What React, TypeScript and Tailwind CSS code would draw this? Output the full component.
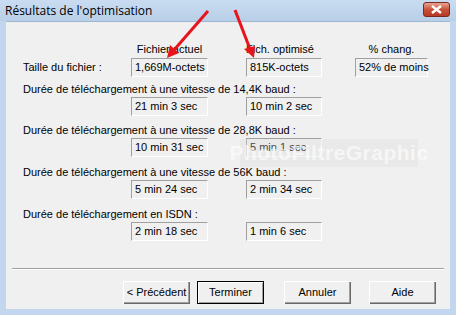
import React from "react";

const font = { fontFamily: "'Liberation Sans', Arial, sans-serif" };

function Box({ children }: { children: React.ReactNode }) {
  return (
    <div className="h-[19px] border-t border-l border-t-[#a0a0a0] border-l-[#a0a0a0] border-r border-b border-r-white border-b-white bg-[#f0f0f0] pl-[3px] flex items-center text-[11px] text-black whitespace-nowrap">
      {children}
    </div>
  );
}

function Button({ label, primary }: { label: string; primary?: boolean }) {
  return (
    <div
      className={
        "w-[67px] h-[23px] flex items-center justify-center text-[11px] text-black bg-[#f0f0f0] whitespace-nowrap " +
        (primary
          ? "border border-black shadow-[inset_1px_1px_0_#fff,inset_-1px_-1px_0_#a0a0a0]"
          : "shadow-[inset_1px_1px_0_#fff,inset_-1px_-1px_0_#696969,inset_-2px_-2px_0_#a0a0a0]")
      }
    >
      {label}
    </div>
  );
}

export default function App() {
  const rows = [
    { label: "Durée de téléchargement à une vitesse de 14,4K baud :", a: "21 min 3 sec", b: "10 min 2 sec", mt: "mt-[5px]" },
    { label: "Durée de téléchargement à une vitesse de 28,8K baud :", a: "10 min 31 sec", b: "5 min 1 sec", mt: "mt-[7px]" },
    { label: "Durée de téléchargement à une vitesse de 56K baud :", a: "5 min 24 sec", b: "2 min 34 sec", mt: "mt-[8px]" },
    { label: "Durée de téléchargement en ISDN :", a: "2 min 18 sec", b: "1 min 6 sec", mt: "mt-[8px]" },
  ];

  return (
    <div className="relative w-[456px] h-[315px] overflow-hidden bg-[#c2d7ee]" style={font}>
      {/* title bar */}
      <div className="h-[21px] flex items-center justify-between pl-[5px] pr-[6px] bg-gradient-to-b from-[#c9dcf1] to-[#b9cfe8]">
        <span className="text-[12px] text-black" style={{ fontFamily: "'Open Sans', 'Noto Sans', sans-serif" }}>
          Résultats de l'optimisation
        </span>
        <div className="w-[27px] h-[15px] mt-[-2px] rounded-[3px] border border-[#7a2a20] bg-gradient-to-b from-[#e8a493] via-[#c8513a] to-[#b63a23] flex items-center justify-center">
          <svg width="11" height="9" viewBox="0 0 11 9">
            <path d="M1 1 L10 8 M10 1 L1 8" stroke="#fff" strokeWidth="2.4" />
          </svg>
        </div>
      </div>

      {/* client area */}
      <div className="mx-[6px] h-[288px] bg-[#f0f0f0] border-t border-[#9fb7d1] pt-[20px]">
        <div className="grid grid-cols-[108px_77px_38px_76px_33px_73px] pl-[17px] text-[11px] text-black">
          <div className="h-[14px]" />
          <div className="h-[14px] leading-[14px] text-center whitespace-nowrap">Fichier actuel</div>
          <div />
          <div className="h-[14px] leading-[14px] text-center whitespace-nowrap pr-[8px]">Fich. optimisé</div>
          <div />
          <div className="h-[14px] leading-[14px] text-center whitespace-nowrap">% chang.</div>

          <div className="mt-[2px] h-[19px] flex items-center whitespace-nowrap">Taille du fichier :</div>
          <div className="mt-[2px]"><Box>1,669M-octets</Box></div>
          <div />
          <div className="mt-[2px]"><Box>815K-octets</Box></div>
          <div />
          <div className="mt-[2px]"><Box>52% de moins</Box></div>
        </div>

        {rows.map((r) => (
          <div key={r.label} className={r.mt}>
            <div className="pl-[17px] h-[14px] leading-[14px] text-[11px] text-black whitespace-nowrap">{r.label}</div>
            <div className="grid grid-cols-[108px_77px_38px_76px] pl-[17px] mt-[1px]">
              <div />
              <Box>{r.a}</Box>
              <div />
              <Box>{r.b}</Box>
            </div>
          </div>
        ))}

        {/* separator */}
        <div className="mx-[6px] mt-[27px] h-[2px] border-t border-[#a0a0a0] border-b border-b-white" />

        <div className="flex mt-[11px] pl-[117px]">
          <Button label="< Précédent" />
          <div className="ml-[7px]">
            <Button label="Terminer" primary />
          </div>
          <div className="ml-[20px]">
            <Button label="Annuler" />
          </div>
          <div className="ml-[18px]">
            <Button label="Aide" />
          </div>
        </div>
      </div>

      {/* watermark */}
      <div className="absolute left-[240px] top-[139px] w-[178px] h-[28px] bg-[#dcdcdc]/30 flex items-center justify-center pointer-events-none">
        <span className="text-[21px] font-bold text-white/60 tracking-[0.5px]" style={{ fontFamily: "'Liberation Sans', sans-serif" }}>
          PhotoFiltreGraphic
        </span>
      </div>

      {/* red arrows */}
      <svg className="absolute left-0 top-0 pointer-events-none" width="456" height="315">
        <line x1="208" y1="11" x2="174" y2="50" stroke="#e8141c" strokeWidth="3" />
        <polygon points="167,58 170,45 179,53" fill="#e8141c" />
        <line x1="235" y1="10" x2="250" y2="49" stroke="#e8141c" strokeWidth="3" />
        <polygon points="254,58 244,49 255,46" fill="#e8141c" />
      </svg>
    </div>
  );
}
